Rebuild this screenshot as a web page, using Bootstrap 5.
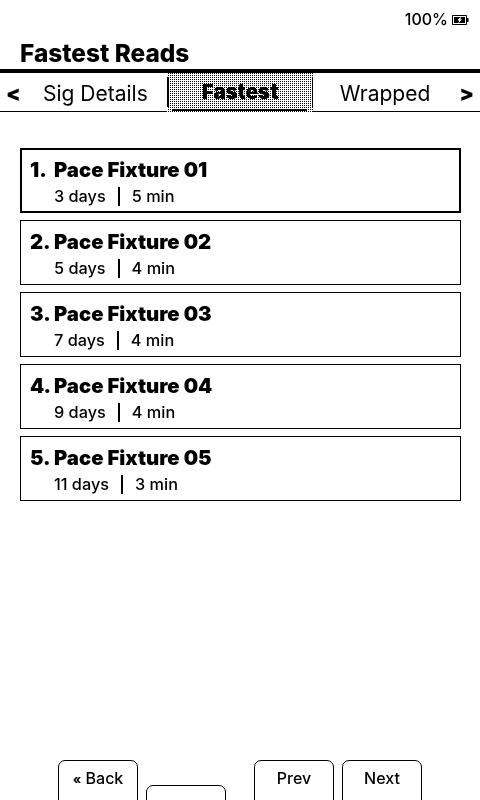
<!DOCTYPE html>
<html lang="en">
<head>
<meta charset="utf-8">
<title>Fastest Reads</title>
<link href="https://cdn.jsdelivr.net/npm/bootstrap@5.3.0/dist/css/bootstrap.min.css" rel="stylesheet">
<style>
html, body { width: 480px; height: 800px; overflow: hidden; }
body { font-family: "Inter", "Noto Sans", sans-serif; color: #000; background: #fff; }
.page-shell { height: 800px; overflow: hidden; filter: grayscale(1) contrast(3); }
.status-bar { height: 37px; padding-right: 11px; font-size: 16px; line-height: 1; padding-top: 11px; font-weight: 500; gap: 4px; }
.page-title { font-size: 24.4px; font-weight: 800; line-height: 32px; margin: 0; padding-left: 20px; height: 32px; }
.tab-strip { border-top: 4px solid #000; border-bottom: 1px solid #000; height: 43px; flex: none; }
.tab-arrow { width: 38px; font-size: 17px; font-weight: 900; }
.tab-arrow-end { width: 38px; }
.tab-item { font-size: 21px; line-height: 1; height: 38px; padding-top: 2px; }
.tab-edge-l { padding-left: 6px; }
.tab-edge-r { padding-right: 6px; }
.tab-side-a { width: 129px; padding-left: 5px; }
.tab-current { width: 146px; height: 39px; padding-top: 0; font-weight: 900; font-size: 20.5px;
  background-color: #fff;
  background-image:
    linear-gradient(#000, #000), linear-gradient(#000, #000),
    conic-gradient(#000 25%, #fff 0);
  background-size: 2px 30px, 1px 30px, 2px 2px;
  background-position: 0 4px, 100% 4px, 0 0;
  background-repeat: no-repeat, no-repeat, repeat; }
.tab-label { flex: 1; padding-top: 3px; }
.tab-rule { height: 2px; background: #000; margin: 0 6px 1px 5px; }
.tab-side-b { width: 129px; padding-left: 15px; }
.read-list { padding: 36px 19px 0 20px; gap: 7px; flex: 1 1 auto; }
.read-row { height: 65px; border: 1px solid #000; padding: 7px 9px; flex: none; }
.read-row-on { border-width: 2px; padding: 6px 8px; }
.read-top { font-size: 20.3px; font-weight: 900; line-height: 28px; }
.read-num { min-width: 24px; flex: none; }
.read-sub { font-size: 16.3px; font-weight: 500; line-height: 22px; padding-left: 24px; margin-top: 1px; }
.read-sep { width: 2px; height: 19px; margin: 0 12px; background: #000; vertical-align: -4px; }
.foot-bar { padding-left: 58px; height: 40px; flex: none; }
.foot-key { width: 80px; height: 60px; border: 1px solid #000; border-radius: 7px 7px 0 0; font-size: 16px; font-weight: 500; line-height: 1; padding-top: 9px; flex: none; }
.foot-key-low { margin-top: 25px; margin-left: 8px; margin-right: 28px; }
.foot-key-next { margin-left: 8px; }
.guil-mark { font-size: 13px; font-weight: 700; }
</style>
</head>
<body>
<div class="page-shell d-flex flex-column">
  <div class="status-bar d-flex justify-content-end align-items-start">
    <span>100%</span>
    <svg width="17" height="10" viewBox="0 0 17 10" class="mt-1" aria-hidden="true">
      <path d="M0.5 0.5H14.5V9.5H0.5Z" fill="#fff" stroke="#000"/>
      <path d="M2 2H13V8H2Z" fill="#000"/>
      <path d="M15 3H16.5V7H15Z" fill="#000"/>
      <path d="M9.5 1.5L5 5.5H7.5L5.5 8.5L10.5 4.5H8Z" fill="#fff"/>
    </svg>
  </div>
  <h1 class="page-title">Fastest Reads</h1>
  <div class="tab-strip d-flex align-items-start">
    <div class="tab-arrow tab-item tab-edge-l d-flex align-items-center">&lt;</div>
    <div class="tab-item tab-side-a d-flex align-items-center">Sig Details</div>
    <div class="tab-item tab-current d-flex flex-column">
      <div class="tab-label d-flex align-items-center justify-content-center">Fastest</div>
      <div class="tab-rule"></div>
    </div>
    <div class="tab-item tab-side-b d-flex align-items-center justify-content-center">Wrapped</div>
    <div class="tab-arrow tab-arrow-end tab-item tab-edge-r d-flex align-items-center justify-content-end">&gt;</div>
  </div>
  <div class="read-list d-flex flex-column">
    <div class="read-row read-row-on">
      <div class="read-top d-flex"><span class="read-num">1.</span><span>Pace Fixture 01</span></div>
      <div class="read-sub">3 days<span class="read-sep d-inline-block"></span>5 min</div>
    </div>
    <div class="read-row">
      <div class="read-top d-flex"><span class="read-num">2.</span><span>Pace Fixture 02</span></div>
      <div class="read-sub">5 days<span class="read-sep d-inline-block"></span>4 min</div>
    </div>
    <div class="read-row">
      <div class="read-top d-flex"><span class="read-num">3.</span><span>Pace Fixture 03</span></div>
      <div class="read-sub">7 days<span class="read-sep d-inline-block"></span>4 min</div>
    </div>
    <div class="read-row">
      <div class="read-top d-flex"><span class="read-num">4.</span><span>Pace Fixture 04</span></div>
      <div class="read-sub">9 days<span class="read-sep d-inline-block"></span>4 min</div>
    </div>
    <div class="read-row">
      <div class="read-top d-flex"><span class="read-num">5.</span><span>Pace Fixture 05</span></div>
      <div class="read-sub">11 days<span class="read-sep d-inline-block"></span>3 min</div>
    </div>
  </div>
  <div class="foot-bar d-flex align-items-start">
    <div class="foot-key text-center"><span class="guil-mark">«</span> Back</div>
    <div class="foot-key foot-key-low"></div>
    <div class="foot-key text-center">Prev</div>
    <div class="foot-key foot-key-next text-center">Next</div>
  </div>
</div>
<script src="https://cdn.jsdelivr.net/npm/bootstrap@5.3.0/dist/js/bootstrap.bundle.min.js"></script>
</body>
</html>
